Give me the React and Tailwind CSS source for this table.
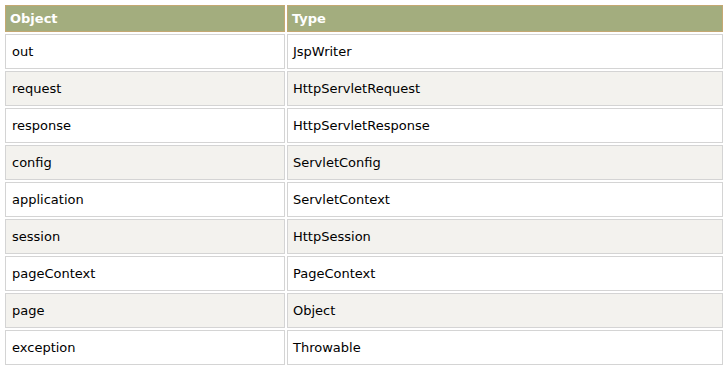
const rows = [
  ["out", "JspWriter"],
  ["request", "HttpServletRequest"],
  ["response", "HttpServletResponse"],
  ["config", "ServletConfig"],
  ["application", "ServletContext"],
  ["session", "HttpSession"],
  ["pageContext", "PageContext"],
  ["page", "Object"],
  ["exception", "Throwable"],
];

export default function App() {
  return (
    <div className="bg-white p-[3px] font-['DejaVu_Sans',Verdana,sans-serif] text-[13px] text-black">
      <table className="w-[722px] table-fixed border-separate border-spacing-[2px]">
        <colgroup>
          <col className="w-[280px]" />
          <col />
        </colgroup>
        <thead>
          <tr>
            <th className="h-[27px] border border-[#c4a872] bg-[#a3ad7e] px-[4px] py-0 text-left font-bold text-white">
              Object
            </th>
            <th className="h-[27px] border border-[#c4a872] bg-[#a3ad7e] px-[4px] py-0 text-left font-bold text-white">
              Type
            </th>
          </tr>
        </thead>
        <tbody>
          {rows.map(([obj, type], i) => {
            const bg = i % 2 === 1 ? "bg-[#f3f2ee]" : "bg-white";
            return (
              <tr key={obj}>
                <td className={`h-[35px] border border-[#d4d4d4] px-[6px] py-0 ${bg}`}>{obj}</td>
                <td className={`h-[35px] border border-[#d4d4d4] px-[5px] py-0 ${bg}`}>{type}</td>
              </tr>
            );
          })}
        </tbody>
      </table>
    </div>
  );
}
